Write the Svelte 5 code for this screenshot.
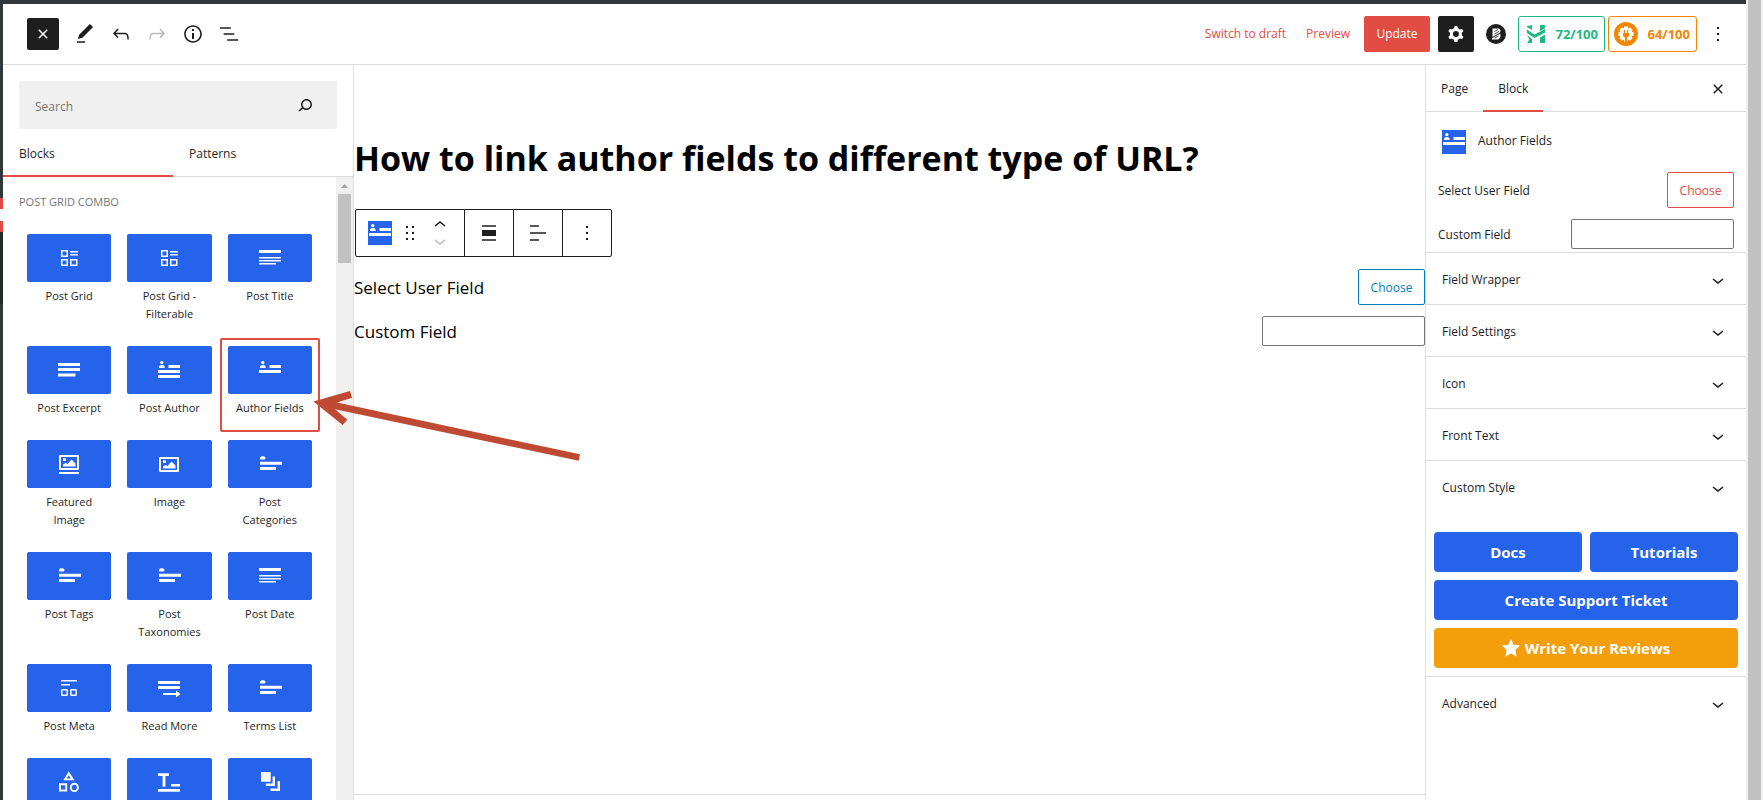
<script>
  const icons = {
    closeSmall: 'M12 13.06l3.712 3.713 1.061-1.06L13.061 12l3.712-3.712-1.06-1.06L12 10.938 8.288 7.227l-1.061 1.06L10.939 12l-3.712 3.712 1.06 1.061L12 13.061z',
    pencil: 'M20.1 5.1L16.9 2 6.2 12.7l-1.3 4.4 4.5-1.3L20.1 5.1zM4 20.8h8v-1.5H4v1.5z',
    undo: 'M18.3 11.7c-.6-.6-1.4-.9-2.3-.9H6.7l2.9-3.3-1.1-1-4.5 5L8.5 16l1-1-2.7-2.7H16c.5 0 .9.2 1.3.5 1 1 1 3.4 1 4.5v.3h1.5v-.2c0-1.5 0-4.3-1.5-5.7z',
    redo: 'M15.6 6.5l-1.1 1 2.9 3.3H8c-.9 0-1.7.3-2.3.9-1.4 1.5-1.4 4.2-1.4 5.6v.2h1.5v-.3c0-1.1 0-3.5 1-4.5.3-.3.7-.5 1.3-.5h9.2L14.5 15l1.1 1.1 4.6-4.6-4.6-5z',
    info: 'M12 3.2c-4.8 0-8.8 3.9-8.8 8.8 0 4.8 3.9 8.8 8.8 8.8 4.8 0 8.8-3.9 8.8-8.8 0-4.8-4-8.8-8.8-8.8zm0 16c-4 0-7.2-3.3-7.2-7.2C4.8 8 8 4.8 12 4.8s7.2 3.3 7.2 7.2c0 4-3.2 7.2-7.2 7.2zM11 17h2v-6h-2v6zm0-8h2V7h-2v2z',
    list: 'M13.8 5.2H3v1.5h10.8V5.2zm-3.6 12v1.5H21v-1.5H10.2zm7.2-6H6.6v1.5h10.8v-1.5z',
    search: 'M13.5 6C10.5 6 8 8.5 8 11.5c0 1.1.3 2.1.9 3l-3.4 3 1 1.1 3.4-2.9c1 .9 2.2 1.4 3.6 1.4 3 0 5.5-2.5 5.5-5.5C19 8.5 16.5 6 13.5 6zm0 9.5c-2.2 0-4-1.8-4-4s1.8-4 4-4 4 1.8 4 4-1.8 4-4 4z',
    down: 'M17.5 11.6L12 16l-5.5-4.4.9-1.2L12 14l4.5-3.6 1 1.2z',
    up: 'M6.5 12.4L12 8l5.5 4.4-.9 1.2L12 10l-4.5 3.6-1-1.2z',
    more: 'M13 19h-2v-2h2v2zm0-6h-2v-2h2v2zm0-6h-2V5h2v2z',
    drag: 'M8 7h2V5H8v2zm0 6h2v-2H8v2zm0 6h2v-2H8v2zm6-14v2h2V5h-2zm0 8h2v-2h-2v2zm0 6h2v-2h-2v2z',
    align: 'M5 4.2v1.6h14V4.2H5zm0 15.6h14v-1.6H5v1.6zM5 9h14v6H5V9z',
    textLeft: 'M4 19.8h8.9v-1.5H4v1.5zm8.9-15.6H4v1.5h8.9V4.2zm-8.9 7v1.5h16v-1.5H4z',
    gear: 'M10.289 4.836A1 1 0 0 1 11.275 4h1.306a1 1 0 0 1 .987.836l.244 1.466c.787.26 1.503.679 2.108 1.218l1.393-.522a1 1 0 0 1 1.216.437l.653 1.13a1 1 0 0 1-.23 1.273l-1.148.944a6.025 6.025 0 0 1 0 2.435l1.149.946a1 1 0 0 1 .23 1.272l-.653 1.13a1 1 0 0 1-1.216.437l-1.394-.522c-.605.54-1.32.958-2.108 1.218l-.244 1.466a1 1 0 0 1-.987.836h-1.306a1 1 0 0 1-.986-.836l-.244-1.466a5.995 5.995 0 0 1-2.108-1.218l-1.394.522a1 1 0 0 1-1.217-.436l-.653-1.131a1 1 0 0 1 .23-1.272l1.149-.946a6.026 6.026 0 0 1 0-2.435l-1.148-.944a1 1 0 0 1-.23-1.272l.653-1.131a1 1 0 0 1 1.217-.437l1.393.522a5.994 5.994 0 0 1 2.108-1.218l.244-1.466ZM14.929 12a3 3 0 1 1-6 0 3 3 0 0 1 6 0Z'
  };

  const grid = 'M4 4h7v7H4zM5.5 5.5v4h4v-4zM4 13h7v7H4zM5.5 14.5v4h4v-4zM13 13h7.5v7H13zM14.5 14.5v4H19v-4zM13 5h8v1.5h-8zM13 8h8v1.5h-8z';
  const title = 'M1 4h22v3H1zM1 11h22v1.6H1zM1 14h22v1.6H1zM1 17h17v1.6H1z';
  const terms = 'M2 7.500V6q.3-1.500 2-1.700h2L7.800 6 6.500 7.500zM2 9.800h22v3H2zM2 15h16v3H2z';
  const person = 'M4.8 2.9a1.7 1.7 0 1 1 0 3.4 1.7 1.7 0 0 1 0-3.4zM2 10V8.500q0-1.500 2.800-1.500t2.800 1.500V10zM11.500 7H23v3H11.500zM1 12h22v3H1z';

  const blocks = [
    { label: 'Post Grid', d: grid },
    { label: 'Post Grid - Filterable', d: grid },
    { label: 'Post Title', d: title },
    { label: 'Post Excerpt', d: 'M1 5h22v3H1zM1 10h22v3H1zM1 15.500h17.500v3H1z' },
    { label: 'Post Author', d: person + 'M1 17h22v3H1z' },
    { label: 'Author Fields', d: person, selected: true },
    { label: 'Featured Image', d: 'M3 3h18a1 1 0 0 1 1 1v13a1 1 0 0 1-1 1H3a1 1 0 0 1-1-1V4a1 1 0 0 1 1-1zM4 5v11h16V5zM6 6.200h2.800v2.800H6zM6 14.500v-2l2.500-1.500 2 1 4-4.500 4 4v3zM2 20h20v2H2z' },
    { label: 'Image', d: 'M3 5h18a1 1 0 0 1 1 1v13a1 1 0 0 1-1 1H3a1 1 0 0 1-1-1V6a1 1 0 0 1 1-1zM4 7v11h16V7zM6 8.200h2.800v2.800H6zM6 16.500v-2l2.500-1.500 2 1 4-4.500 4 4v3z' },
    { label: 'Post Categories', d: terms },
    { label: 'Post Tags', d: terms },
    { label: 'Post Taxonomies', d: terms },
    { label: 'Post Date', d: title },
    { label: 'Post Meta', d: 'M4 4h16v1.600H4zM4 8h9v1.600H4zM5 13h5l1 1v5l-1 1H5l-1-1v-5zM5.500 14.500v4h4v-4zM14 13h5l1 1v5l-1 1h-5l-1-1v-5zM14.500 14.500v4h4v-4z' },
    { label: 'Read More', d: 'M1 5h22v3H1zM1 10h22v3H1zM6 17h13v-2.500l4.500 3.500-4.500 3.500V19H6z' },
    { label: 'Terms List', d: terms },
    { d: 'M11.800 1.300l5.500 9H6.300zM11.800 5.200L9.800 8.500h4zM2 13.300h8.200v8.200H2zM4 15.300v4.200h4.200v-4.200zM17.300 12.800a4.600 4.600 0 1 1 0 9.200 4.600 4.600 0 0 1 0-9.200zM17.300 14.800a2.600 2.600 0 1 0 0 5.200 2.600 2.600 0 0 0 0-5.200z' },
    { d: 'M1 3.300h11V6H8.400v10.800H5.600V6H1zM14 14h9v2.500h-9zM1 19h22v2.700H1z' },
    { d: 'M3 2h9.700v9.700H3zM14.600 6.500H17V16H7.800v-2.400h6.800zM19.600 11H22v10h-9.500v-2.400h7.100z' }
  ];

  const panels = ['Field Wrapper', 'Field Settings', 'Icon', 'Front Text', 'Custom Style'];
</script>

{#snippet icon(d, size = 24)}
  <svg viewBox="0 0 24 24" width={size} height={size} fill="currentColor" fill-rule="evenodd" aria-hidden="true"><path {d} /></svg>
{/snippet}

<div class="window">
  <div class="rail"></div>
  <div class="editor">
    <header>
      <div class="tools">
        <button class="icon-btn dark inserter" aria-label="Close inserter">{@render icon(icons.closeSmall)}</button>
        <button class="icon-btn" aria-label="Tools">{@render icon(icons.pencil)}</button>
        <button class="icon-btn" aria-label="Undo">{@render icon(icons.undo)}</button>
        <button class="icon-btn faded" aria-label="Redo">{@render icon(icons.redo)}</button>
        <button class="icon-btn" aria-label="Details">{@render icon(icons.info)}</button>
        <button class="icon-btn" aria-label="List view">{@render icon(icons.list)}</button>
      </div>
      <div class="actions">
        <div class="text-links">
          <button>Switch to draft</button>
          <button>Preview</button>
        </div>
        <button class="update">Update</button>
        <button class="icon-btn dark settings" aria-label="Settings">{@render icon(icons.gear)}</button>
        <button class="icon-btn brand" aria-label="Page builder">
          <svg viewBox="0 0 20 20" width="20" height="20" aria-hidden="true">
            <circle cx="10" cy="10" r="10" fill="#1e1e1e" />
            <path d="M6.500 4.500h5.500q2.500 0 2.500 2.500 0 1-.8 1.700L6.500 13z" fill="#fff" />
            <path d="M6 14.200l8-4.500q.8 1 .4 2.800-.5 3-3.400 3H6z" fill="#fff" />
            <path d="M8.500 7.500l3.500-2M8.500 10l4.500-2.600M8.500 14.200l4-2.200" stroke="#1e1e1e" stroke-width=".8" />
          </svg>
        </button>
        <button class="score green">
          <svg viewBox="0 0 18 18" width="18" height="18" fill="currentColor" aria-hidden="true">
            <path d="M0 1l5-1v5L0 2zM13 0h5v3l-5 3zM0 4.500l5 3.500 2.500 1.500L18 4v3.500L7.500 13 0 8zM0 10l5 4v4H0l2.500-3.500zM13 12.500l5-3V18h-5z" />
          </svg>
          72/100
        </button>
        <button class="score orange">
          <svg viewBox="0 0 24 24" width="24" height="24" aria-hidden="true">
            <circle cx="12" cy="12" r="12" fill="#f48500" />
            <g fill="#fff">
              <circle cx="12" cy="12" r="6.500" />
              <path d="M10 4.500h4v3h-4zM10 16.500h4v3h-4zM4.500 10h3v4h-3zM16.500 10h3v4h-3zM5.300 7.900l2.600-2.600 2 2-2.600 2.600zM16.100 5.300l2.600 2.600-2 2-2.600-2.600zM5.300 16.100l2.600 2.600 2-2-2.600-2.600zM18.700 16.100l-2.600 2.600-2-2 2.600-2.600z" />
            </g>
            <path d="M9.800 8h1.200v3h2V8h1.200v3h.8v2q0 2-2 2.500v5h-2v-5q-2-.5-2-2.500v-2h.8z" fill="#f48500" />
          </svg>
          64/100
        </button>
        <button class="icon-btn options" aria-label="Options">{@render icon(icons.more)}</button>
      </div>
    </header>

    <div class="body">
      <section class="library">
        <div class="search">
          <input type="search" placeholder="Search" aria-label="Search" />
          {@render icon(icons.search)}
        </div>
        <div class="tabs" role="tablist">
          <button role="tab" aria-selected="true" class="active">Blocks</button>
          <button role="tab" aria-selected="false">Patterns</button>
        </div>
        <div class="scroller">
          <div class="blocks">
            <h2>POST GRID COMBO</h2>
            <div class="grid">
              {#each blocks as block}
                <button class="block" class:selected={block.selected}>
                  <span class="tile">{@render icon(block.d)}</span>
                  {#if block.label}<span class="name">{block.label}</span>{/if}
                </button>
              {/each}
            </div>
          </div>
          <div class="track">
            <svg viewBox="0 0 17 17" width="17" height="17" aria-hidden="true"><path d="M5 11l3.500-4 3.500 4z" fill="#a3a3a3" /></svg>
            <div class="thumb"></div>
          </div>
        </div>
      </section>

      <main>
        <div class="canvas">
          <h1>How to link author fields to different type of URL?</h1>
          <div class="toolbar" role="toolbar" aria-label="Block tools">
            <div class="group wide">
              <button class="block-icon" aria-label="Author Fields">{@render icon(person)}</button>
              <button aria-label="Drag">{@render icon(icons.drag)}</button>
              <span class="movers">
                <button aria-label="Move up">{@render icon(icons.up)}</button>
                <button class="faded" aria-label="Move down">{@render icon(icons.down)}</button>
              </span>
            </div>
            <div class="group"><button aria-label="Align">{@render icon(icons.align)}</button></div>
            <div class="group"><button aria-label="Align text">{@render icon(icons.textLeft)}</button></div>
            <div class="group"><button aria-label="Options">{@render icon(icons.more)}</button></div>
          </div>
          <div class="field">
            <span>Select User Field</span>
            <button class="choose blue">Choose</button>
          </div>
          <div class="field">
            <label for="canvas-custom">Custom Field</label>
            <input id="canvas-custom" type="text" />
          </div>
        </div>
        <footer></footer>
      </main>

      <aside>
        <div class="side-tabs">
          <button>Page</button>
          <button class="active">Block</button>
          <button class="icon-btn close" aria-label="Close settings">{@render icon(icons.closeSmall)}</button>
        </div>
        <div class="card">
          <span class="block-icon">{@render icon(person)}</span>
          <h2>Author Fields</h2>
        </div>
        <div class="controls">
          <div class="field">
            <span>Select User Field</span>
            <button class="choose">Choose</button>
          </div>
          <div class="field">
            <label for="side-custom">Custom Field</label>
            <input id="side-custom" type="text" />
          </div>
        </div>
        {#each panels as panel}
          <button class="panel">{panel}{@render icon(icons.down)}</button>
        {/each}
        <div class="links">
          <a href="#docs">Docs</a>
          <a href="#tutorials">Tutorials</a>
          <a href="#support" class="full">Create Support Ticket</a>
          <a href="#reviews" class="full amber">
            <svg viewBox="0 0 18 18" width="18" height="18" fill="currentColor" aria-hidden="true"><path d="M9 0l2.700 5.800 6.300.8-4.600 4.400 1.200 6.500L9 14.400l-5.600 3.100L4.600 11 0 6.600l6.300-.8z" /></svg>
            Write Your Reviews
          </a>
        </div>
        <button class="panel">Advanced{@render icon(icons.down)}</button>
      </aside>

      <svg class="pointer" viewBox="0 0 268 71" width="268" height="71" aria-hidden="true">
        <path d="M.3 11.500L37 1l2 6.700-15 4.800L267 64.300l-1.300 6.400L22 19.300l12.300 10.400-4.600 5.300z" fill="#bf4a33" />
      </svg>
    </div>
  </div>
  <div class="page-scroll"><div></div></div>
</div>

<style>
  :global(body) {
    margin: 0;
    background: #fff;
  }
  .window,
  .window * {
    box-sizing: border-box;
  }
  .window {
    display: flex;
    height: 100vh;
    overflow: hidden;
    font-family: 'Open Sans', 'Noto Sans', sans-serif;
    font-size: 12px;
    line-height: 18px;
    color: #1e1e1e;
  }
  svg {
    display: block;
    flex: none;
  }
  button {
    font: inherit;
    color: inherit;
    background: none;
    border: 0;
    margin: 0;
    padding: 0;
    cursor: pointer;
  }
  input {
    font: inherit;
    margin: 0;
  }
  .rail {
    width: 3px;
    flex: none;
    background: linear-gradient(#32373c 198px, #e14d43 198px 209px, #fff 209px 221px, #e14d43 221px 232px, #23282d 232px 304px, #32373c 304px);
  }
  .editor {
    flex: 1;
    min-width: 0;
    display: flex;
    flex-direction: column;
    border-top: 4px solid #32373c;
  }
  .page-scroll {
    width: 17px;
    flex: none;
    padding: 0 2px;
    background: #f0f0f0;
  }
  .page-scroll div {
    height: 100%;
    background: #c1c1c1;
  }

  header {
    flex: none;
    height: 61px;
    display: flex;
    justify-content: space-between;
    border-bottom: 1px solid #ddd;
  }
  .tools,
  .actions {
    display: flex;
    align-items: center;
  }
  .tools {
    padding-left: 24px;
    gap: 4px;
  }
  .icon-btn {
    display: flex;
    align-items: center;
    justify-content: center;
    width: 32px;
    height: 36px;
  }
  .inserter {
    height: 32px;
    margin-right: 6px;
  }
  .dark {
    background: #1e1e1e;
    color: #fff;
    border-radius: 2px;
  }
  .faded {
    color: #bbb;
  }
  .actions {
    padding-right: 16px;
  }
  .text-links {
    display: flex;
    gap: 20px;
    margin-right: 14px;
    color: #e14d43;
  }
  .update {
    width: 66px;
    height: 36px;
    margin-right: 8px;
    background: #e14d43;
    color: #fff;
    border-radius: 2px;
  }
  .settings {
    width: 36px;
  }
  .brand {
    width: 44px;
  }
  .score {
    display: flex;
    align-items: center;
    justify-content: space-between;
    height: 36px;
    width: 87px;
    padding: 0 6px 0 8px;
    border: 1px solid currentColor;
    border-radius: 3px;
    font-size: 13px;
    font-weight: 700;
  }
  .green {
    color: #1cb980;
    margin-right: 3px;
  }
  .orange {
    width: 89px;
    padding-left: 5px;
    color: #f48500;
  }
  .options {
    width: 24px;
    margin-left: 9px;
  }

  .body {
    position: relative;
    flex: 1;
    min-height: 0;
    display: flex;
  }
  .library {
    width: 351px;
    flex: none;
    display: flex;
    flex-direction: column;
    border-right: 1px solid #ddd;
  }
  .search {
    flex: none;
    display: flex;
    align-items: center;
    height: 48px;
    margin: 16px 16px 0;
    padding: 0 20px 0 16px;
    background: #f0f0f0;
    border-radius: 2px;
  }
  .search input {
    flex: 1;
    min-width: 0;
    padding: 3px 0 0;
    border: 0;
    outline: 0;
    background: none;
    appearance: none;
  }
  .search input::placeholder {
    color: #757575;
    opacity: 1;
  }
  .tabs {
    flex: none;
    display: grid;
    grid-template-columns: 170px 1fr;
    height: 48px;
    border-bottom: 1px solid #ddd;
  }
  .tabs button {
    height: 48px;
    padding: 2px 16px 0;
    text-align: left;
  }
  .tabs .active,
  .side-tabs .active {
    border-bottom: 2px solid #e14d43;
  }
  .tabs .active {
    padding-top: 4px;
  }
  .scroller {
    flex: 1;
    min-height: 0;
    display: flex;
    overflow: hidden;
  }
  .blocks {
    flex: 1;
    padding: 16px 16px 0;
  }
  .blocks h2 {
    margin: 0 0 16px;
    font-size: 11px;
    line-height: 17px;
    font-weight: 500;
    color: #757575;
  }
  .grid {
    display: grid;
    grid-template-columns: repeat(3, 1fr);
  }
  .block {
    display: flex;
    flex-direction: column;
    justify-content: flex-start;
    padding: 8px 8px 15px;
    font-size: 11px;
  }
  .selected {
    box-shadow: inset 0 0 0 2px #e14d43;
    border-radius: 2px;
  }
  .tile {
    display: flex;
    align-items: center;
    justify-content: center;
    width: 100%;
    height: 48px;
    margin-bottom: 5px;
    border-radius: 2px;
    background: #2563eb;
    color: #fff;
  }
  .name {
    width: 100%;
    padding: 0 6px;
    text-align: center;
  }
  .selected .name {
    padding: 0;
  }
  .track {
    width: 17px;
    flex: none;
    background: #f0f0f0;
  }
  .thumb {
    height: 69px;
    margin: 0 2px;
    background: #c1c1c1;
  }

  main {
    flex: 1;
    min-width: 0;
    display: flex;
    flex-direction: column;
    color: #000;
  }
  .canvas {
    flex: 1;
    padding-top: 67px;
  }
  h1 {
    margin: 0 0 25px;
    font-size: 34px;
    line-height: 52px;
    font-weight: 700;
  }
  .toolbar {
    display: flex;
    width: fit-content;
    height: 48px;
    margin-left: 1px;
    border: 1px solid #1e1e1e;
    border-radius: 2px;
    background: #fff;
    color: #1e1e1e;
  }
  .group {
    display: flex;
    align-items: center;
    justify-content: center;
    width: 49px;
  }
  .group + .group {
    border-left: 1px solid #1e1e1e;
  }
  .group.wide {
    width: 108px;
    gap: 6px;
  }
  .movers {
    display: flex;
    flex-direction: column;
    height: 32px;
    justify-content: space-between;
  }
  .movers button {
    height: 16px;
    display: flex;
    align-items: center;
  }
  .block-icon {
    background: #2563eb;
    color: #fff;
  }
  .field {
    display: flex;
    align-items: center;
    justify-content: space-between;
    font-size: 17px;
    margin-top: 11px;
  }
  .toolbar + .field {
    margin-top: 12px;
  }
  .field span,
  .field label {
    padding-top: 2px;
  }
  .field input {
    width: 163px;
    height: 30px;
    border: 1px solid #757575;
    border-radius: 2px;
    background: #fff;
  }
  .choose {
    width: 67px;
    height: 36px;
    padding-top: 2px;
    border: 1px solid #e14d43;
    border-radius: 2px;
    color: #e14d43;
    font-size: 12px;
  }
  .blue {
    border-color: #007cba;
    color: #007cba;
  }
  footer {
    height: 6px;
    border-top: 1px solid #ddd;
  }

  aside {
    width: 321px;
    flex: none;
    border-left: 1px solid #ddd;
  }
  .side-tabs {
    display: flex;
    height: 47px;
    border-bottom: 1px solid #ddd;
    font-weight: 500;
  }
  .side-tabs button {
    height: 47px;
    padding: 0 15px;
  }
  .side-tabs .active {
    padding-top: 2px;
  }
  .side-tabs .close {
    width: 24px;
    padding: 0;
    margin: 0 16px 0 auto;
  }
  .card {
    display: flex;
    gap: 12px;
    padding: 18px 16px 16px;
  }
  .card h2 {
    margin: 0;
    font-size: 12px;
    line-height: 22px;
    font-weight: 500;
  }
  .controls {
    padding: 2px 12px 3px;
  }
  .controls .field {
    font-size: 12px;
  }
  .controls .field:first-child {
    margin-top: 0;
  }
  .panel {
    display: flex;
    align-items: center;
    justify-content: space-between;
    width: 100%;
    height: 52px;
    padding: 2px 16px 0;
    border-top: 1px solid #ddd;
    font-weight: 500;
  }
  .links {
    display: grid;
    grid-template-columns: 1fr 1fr;
    gap: 8px;
    padding: 20px 8px 8px;
  }
  .links a {
    display: flex;
    align-items: center;
    justify-content: center;
    gap: 5px;
    height: 40px;
    border-radius: 4px;
    background: #2563eb;
    color: #fff;
    font-size: 15px;
    font-weight: 700;
    text-decoration: none;
  }
  .links .full {
    grid-column: 1 / -1;
  }
  .links .amber {
    background: #f59e0b;
  }

  .pointer {
    position: absolute;
    left: 310px;
    top: 325px;
    pointer-events: none;
  }
</style>
